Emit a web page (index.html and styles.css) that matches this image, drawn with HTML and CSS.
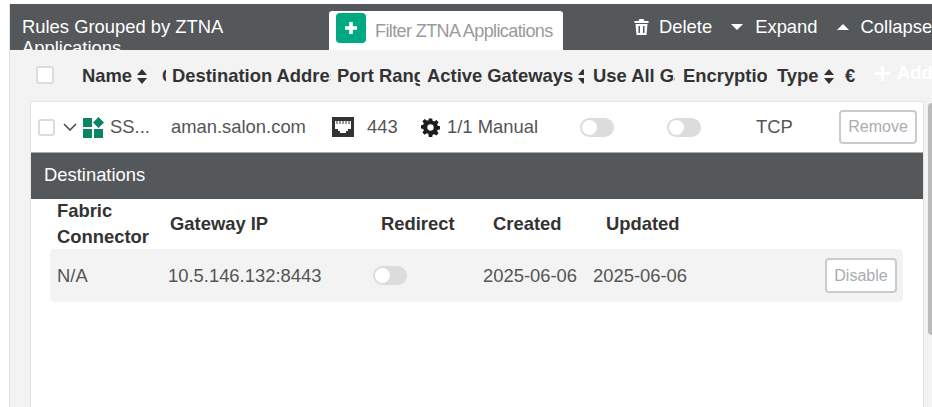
FILE: index.html
```html
<!DOCTYPE html>
<html lang="en">

<head>
  <meta charset="UTF-8" />
  <title>Rules Grouped by ZTNA Applications</title>
  <link rel="stylesheet" href="styles.css">
</head>

<body>
  <div class="panel">
    <div class="toolbar">
      <div class="toolbar-title">Rules Grouped by ZTNA Applications</div>
      <div class="filter-tab">
        <span class="add-btn">
          <svg width="14" height="14" viewBox="0 0 14 14"><path d="M5.200 1h3.600v4.200H13v3.600H8.800V13H5.200V8.800H1V5.200h4.200z" fill="#fff" /></svg>
        </span>
        <span class="filter-text">Filter ZTNA Applications</span>
      </div>
      <div class="toolbar-actions">
        <span class="action">
          <svg width="15" height="16" viewBox="0 0 14 16"><path d="M5 0h4l1 2h4v2H0V2h4zM1 5h12l-1 11H2zm3 2v7h1.500V7zm4.500 0v7H10V7z" fill="#fff" /></svg>
          Delete
        </span>
        <span class="action"><i class="caret-down"></i>Expand</span>
        <span class="action"><i class="caret-up"></i>Collapse</span>
      </div>
    </div>

    <div class="table-head">
      <span class="check check-head"></span>
      <span class="th th-name">Name <svg class="sort" width="10" height="15" viewBox="0 0 10 15"><path d="M5 0l5 6H0zM5 15l5-6H0z" fill="#333" /></svg></span>
      <span class="th th-cut">C</span>
      <span class="th th-dest">Destination Address</span>
      <span class="th th-port">Port Range</span>
      <span class="th th-active">Active Gateways <svg class="sort" width="10" height="15" viewBox="0 0 10 15"><path d="M5 0l5 6H0zM5 15l5-6H0z" fill="#333" /></svg></span>
      <span class="th th-all">Use All Gateways</span>
      <span class="th th-enc">Encryption</span>
      <span class="th th-type">Type <svg class="sort" width="10" height="15" viewBox="0 0 10 15"><path d="M5 0l5 6H0zM5 15l5-6H0z" fill="#333" /></svg></span>
      <span class="th th-euro">€</span>
      <span class="th-add">
        <svg width="15" height="15" viewBox="0 0 14 14"><path d="M5.500 0h3v5.500H14v3H8.500V14h-3V8.500H0v-3h5.500z" fill="#fff" /></svg>
        Add
      </span>
    </div>

    <div class="body-wrap">
      <div class="card">
        <div class="row">
          <span class="check"></span>
          <svg class="chevron" width="14" height="8" viewBox="0 0 14 8"><path d="M1 1l6 6 6-6" fill="none" stroke="#4d4d4d" stroke-width="1.600" /></svg>
          <svg class="app-icon" width="21" height="21" viewBox="0 0 21 21">
            <path d="M0 1h9v9H0zM0 12h9v9H0zM11 12h9v9h-9zM15.500 0l5.500 5.500-5.500 5.500L10 5.500z" fill="#0b8465" />
          </svg>
          <span class="cell cell-name">SS...</span>
          <span class="cell cell-dest">aman.salon.com</span>
          <svg class="port-icon" width="22" height="20" viewBox="0 0 22 20">
            <path d="M0 0h22v20H0zM3 4v8h3v2h2v2h6v-2h2v-2h3V4z" fill="#333" fill-rule="evenodd" />
            <path d="M5 4v3M8 4v3M11 4v3M14 4v3M17 4v3" stroke="#333" stroke-width="1" />
          </svg>
          <span class="cell cell-port">443</span>
          <svg class="gear-icon" width="19" height="19" viewBox="0 0 18 18">
            <path d="M7.400 0h3.200l.4 2.400 1.500.6 2-1.400 2.200 2.200-1.400 2 .6 1.500 2.100.5v3.200l-2.100.4-.6 1.500 1.400 2-2.200 2.200-2-1.400-1.500.6-.4 2.700H7.400L7 15.400l-1.500-.6-2 1.400-2.200-2.200 1.400-2-.6-1.500L0 10.100V6.900l2.100-.5.600-1.500-1.400-2 2.200-2.200 2 1.400L7 2z" fill="#1c1c1c" transform="translate(0 .4) scale(1 .95)" />
            <circle cx="9" cy="9" r="3" fill="#fff" />
          </svg>
          <span class="cell cell-active">1/1 Manual</span>
          <span class="toggle toggle-all"></span>
          <span class="toggle toggle-enc"></span>
          <span class="cell cell-type">TCP</span>
          <span class="btn btn-remove">Remove</span>
        </div>

        <div class="dest-bar">Destinations</div>

        <div class="dest-head">
          <span class="dh dh-fabric">Fabric Connector</span>
          <span class="dh dh-ip">Gateway IP</span>
          <span class="dh dh-redirect">Redirect</span>
          <span class="dh dh-created">Created</span>
          <span class="dh dh-updated">Updated</span>
        </div>

        <div class="dest-row">
          <span class="cell dc-fabric">N/A</span>
          <span class="cell dc-ip">10.5.146.132:8443</span>
          <span class="dc-redirect"><span class="toggle"></span></span>
          <span class="cell dc-created">2025-06-06</span>
          <span class="cell dc-updated">2025-06-06</span>
          <span class="btn btn-disable">Disable</span>
        </div>
      </div>
      <div class="scrollbar"></div>
    </div>
  </div>
</body>

</html>
```
FILE: styles.css
```css
* {
  box-sizing: border-box;
  margin: 0;
  padding: 0;
}

html,
body {
  height: 407px;
  overflow: hidden;
}

body {
  font-family: 'Liberation Sans', Arial, sans-serif;
  background: #fff;
  color: #555;
  padding: 4px 0 0 9px;
}

.panel {
  width: 923px;
  height: 403px;
  background: #f3f3f3;
  border-left: 1px solid #e2e2e2;
  overflow: hidden;
}

.toolbar {
  height: 46px;
  background: #54585a;
  display: flex;
  color: #fff;
  font-size: 18.400px;
}

.toolbar-title {
  width: 319px;
  padding: 12px 90px 0 12px;
  line-height: 21px;
  height: 46px;
  overflow: hidden;
  flex: none;
}

.filter-tab {
  width: 234px;
  height: 39px;
  margin-top: 7px;
  background: #fff;
  border-radius: 3px 3px 0 0;
  display: flex;
  align-items: center;
  padding: 0 0 5px 7px;
  flex: none;
}

.add-btn {
  width: 30px;
  height: 30px;
  border-radius: 4px;
  background: #01a982;
  display: flex;
  align-items: center;
  justify-content: center;
  flex: none;
}

.filter-text {
  margin-left: 9px;
  padding-top: 7px;
  color: #9a9a9a;
  font-size: 18px;
  letter-spacing: -0.600px;
  white-space: nowrap;
}

.toolbar-actions {
  display: flex;
  align-items: center;
  margin-left: 71px;
  white-space: nowrap;
  gap: 19px;
}

.action {
  display: flex;
  align-items: center;
  gap: 10px;
}

.caret-down,
.caret-up {
  width: 0;
  height: 0;
  margin-right: 2px;
  border-left: 6px solid transparent;
  border-right: 6px solid transparent;
}

.caret-down {
  border-top: 6px solid #fff;
}

.caret-up {
  border-bottom: 6px solid #fff;
}

.table-head {
  height: 51px;
  display: flex;
  align-items: center;
  padding-left: 26px;
  font-size: 18.400px;
  font-weight: bold;
  color: #333;
}

.th {
  white-space: nowrap;
  overflow: hidden;
  flex: none;
  display: block;
}

.th-name { width: 79px; margin-left: 28px; }
.th-cut { width: 4px; margin-left: 1px; }
.th-dest { width: 159px; margin-left: 6px; }
.th-port { width: 83px; margin-left: 6px; }
.th-active { width: 157px; margin-left: 7px; }
.th-all { width: 82px; margin-left: 9px; }
.th-enc { width: 84px; margin-left: 8px; }
.th-type { width: 60px; margin-left: 10px; }
.th-euro { width: 11px; margin-left: 8px; }

.sort {
  vertical-align: -2px;
}

.th-add {
  display: flex;
  align-items: center;
  gap: 7px;
  margin-left: 19px;
  color: #fff;
  white-space: nowrap;
  padding-bottom: 5px;
}

.check {
  width: 17px;
  height: 17px;
  background: #fff;
  border: 2px solid #dcdcdc;
  border-radius: 3px;
  flex: none;
  display: block;
}

.check-head {
  width: 18px;
  height: 18px;
  margin-bottom: 2px;
}

.body-wrap {
  display: flex;
  height: 310px;
  padding-left: 20px;
}

.card {
  width: 894px;
  height: 310px;
  background: #fff;
  border: 1px solid #e4e4e4;
  border-bottom: 0;
  flex: none;
}

.scrollbar {
  width: 8px;
  height: 232px;
  margin: 2px 0 0 4px;
  background: #bbb;
  border-radius: 4px 0 0 4px;
  flex: none;
}

.row {
  height: 50px;
  display: flex;
  align-items: center;
  padding-left: 7px;
  font-size: 18.400px;
}

.cell {
  white-space: nowrap;
  flex: none;
}

.chevron { margin-left: 8px; flex: none; }
.app-icon { margin-left: 6px; flex: none; }
.cell-name { width: 61px; margin-left: 6px; }
.cell-dest { width: 161px; }
.port-icon { flex: none; }
.cell-port { width: 54px; margin-left: 13px; }
.gear-icon { flex: none; }
.cell-active { width: 133px; margin-left: 7px; }
.cell-type { width: 83px; margin-left: 55px; }

.toggle {
  display: block;
  width: 34px;
  height: 19px;
  border-radius: 10px;
  background: #dcdcdc;
  position: relative;
  flex: none;
}

.toggle::before {
  content: '';
  position: absolute;
  top: 2px;
  left: 2px;
  width: 15px;
  height: 15px;
  border-radius: 50%;
  background: #fff;
}

.toggle-enc { margin-left: 53px; }

.btn {
  display: flex;
  align-items: center;
  justify-content: center;
  background: #fff;
  border: 2px solid #c8ccd0;
  border-radius: 4px;
  color: #a8adb2;
  font-size: 16px;
  flex: none;
}

.btn-remove {
  width: 78px;
  height: 34px;
}

.dest-bar {
  height: 47px;
  background: #54585a;
  border-top: 1px solid #aaa;
  color: #fff;
  font-size: 18.400px;
  line-height: 44px;
  padding-left: 13px;
}

.dest-head {
  height: 50px;
  display: flex;
  align-items: center;
  padding-left: 26px;
  font-size: 18.400px;
  font-weight: bold;
  color: #333;
  line-height: 26px;
}

.dh { flex: none; }
.dh-fabric { width: 113px; }
.dh-ip { width: 211px; }
.dh-redirect { width: 112px; }
.dh-created { width: 113px; }

.dest-row {
  width: 853px;
  height: 53px;
  margin-left: 19px;
  background: #f3f3f3;
  border-radius: 5px;
  display: flex;
  align-items: center;
  padding: 0 6px 0 7px;
  font-size: 18.400px;
}

.dc-fabric { width: 111px; }
.dc-ip { width: 205px; }
.dc-redirect { width: 110px; }
.dc-created { width: 110px; }

.btn-disable {
  width: 72px;
  height: 35px;
  margin-left: auto;
}
```
